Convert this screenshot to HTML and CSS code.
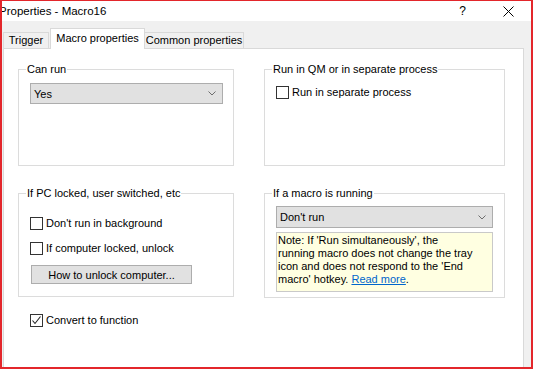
FILE: index.html
```html
<!DOCTYPE html>
<html lang="en">
<head>
  <meta charset="UTF-8" />
  <title>Properties - Macro16</title>
  <link rel="stylesheet" href="styles.css">
</head>
<body>
  <div class="window">
    <div class="titlebar">
      <span class="title">Properties - Macro16</span>
      <span class="help">?</span>
      <svg class="close" width="11" height="11" viewBox="0 0 11 11">
        <path d="M0.5 0.5 L10.5 10.5 M10.5 0.5 L0.5 10.5" stroke="#000" stroke-width="1" fill="none"/>
      </svg>
    </div>

    <div class="frame">
      <div class="tabs">
        <div class="tab tab-trigger">Trigger</div>
        <div class="tab tab-macro active">Macro properties</div>
        <div class="tab tab-common">Common properties</div>
      </div>

      <div class="page">
        <div class="groups">
          <fieldset class="group group-short">
            <legend>Can run</legend>
            <div class="group-body can-run">
              <div class="select select-yes">
                <span>Yes</span>
                <svg width="8" height="5" viewBox="0 0 8 5"><polyline points="0.5,0.5 4,4 7.5,0.5" fill="none" stroke="#6d6d6d" stroke-width="1"/></svg>
              </div>
            </div>
          </fieldset>

          <fieldset class="group group-short">
            <legend>Run in QM or in separate process</legend>
            <div class="group-body run-qm">
              <div class="check"><span class="box"></span>Run in separate process</div>
            </div>
          </fieldset>

          <fieldset class="group group-tall">
            <legend>If PC locked, user switched, etc</legend>
            <div class="group-body pc-locked">
              <div class="check"><span class="box"></span>Don't run in background</div>
              <div class="check"><span class="box"></span>If computer locked, unlock</div>
              <button class="btn">How to unlock computer...</button>
            </div>
          </fieldset>

          <fieldset class="group group-tall group-right">
            <legend>If a macro is running</legend>
            <div class="group-body running">
              <div class="select select-run">
                <span>Don't run</span>
                <svg width="8" height="5" viewBox="0 0 8 5"><polyline points="0.5,0.5 4,4 7.5,0.5" fill="none" stroke="#6d6d6d" stroke-width="1"/></svg>
              </div>
              <div class="note">
                Note: If 'Run simultaneously', the<br>
                running macro does not change the tray<br>
                icon and does not respond to the 'End<br>
                macro' hotkey. <a href="#">Read more</a>.
              </div>
            </div>
          </fieldset>
        </div>

        <div class="check convert">
          <span class="box">
            <svg width="11" height="11" viewBox="0 0 11 11"><polyline points="1.5,5.5 4,8.5 9.5,1.5" fill="none" stroke="#222" stroke-width="1.1"/></svg>
          </span>Convert to function
        </div>
      </div>
    </div>
  </div>
</body>
</html>
```

FILE: styles.css
```css
* {
  box-sizing: border-box;
}

body {
  margin: 0;
  font-family: 'Segoe UI', 'Liberation Sans', sans-serif;
  font-size: 11px;
  color: #000;
  background: #fff;
}

.window {
  width: 533px;
  height: 369px;
  border: 2px solid #e3262b;
  border-top-width: 1px;
  display: flex;
  flex-direction: column;
  overflow: hidden;
}

.titlebar {
  height: 20px;
  flex: none;
  display: flex;
  align-items: center;
  background: #fff;
}

.title {
  font-size: 11.5px;
  margin-left: -3px;
  flex: 1;
}

.help {
  font-size: 12px;
  margin-right: 37px;
}

.close {
  margin-right: 17px;
}

.frame {
  flex: 1;
  display: flex;
  flex-direction: column;
  background: #f0f0f0;
  padding: 0 7px 0 1px;
}

.tabs {
  height: 27px;
  flex: none;
  display: flex;
  align-items: flex-end;
}

.tab {
  height: 16px;
  display: flex;
  align-items: center;
  justify-content: center;
  border: 1px solid #d9d9d9;
  border-bottom: none;
  background: #f0f0f0;
  white-space: nowrap;
  padding-bottom: 1px;
}

.tab-trigger {
  width: 46px;
  margin-right: 1px;
}

.tab-macro {
  width: 95px;
}

.tab-common {
  width: 100px;
  margin-left: -1px;
}

.tab.active {
  height: 21px;
  margin-bottom: -1px;
  background: #fff;
  position: relative;
  z-index: 1;
  padding-bottom: 2px;
}

.page {
  flex: 1;
  background: #fff;
  border: 1px solid #d9d9d9;
  border-bottom: none;
  padding: 13px 0 0 14px;
}

.groups {
  display: grid;
  grid-template-columns: 216px 241px;
  column-gap: 30px;
  row-gap: 20px;
  align-items: start;
}

.group {
  margin: 0;
  padding: 0;
  min-width: 0;
  border: 1px solid #dcdcdc;
}

.group legend {
  margin-left: 7px;
  padding: 0 1px;
  line-height: 14px;
}

.group-short {
  height: 104px;
}

.group-tall {
  height: 111px;
}

.group-right {
  height: 112px;
}

.group-body {
  padding-left: 11px;
}

.can-run {
  padding-top: 7px;
}

.run-qm {
  padding-top: 10px;
}

.pc-locked {
  padding-top: 17px;
}

.running {
  padding-top: 6px;
}

.select {
  height: 21px;
  display: flex;
  align-items: center;
  justify-content: space-between;
  padding: 0 6px 0 3px;
  background: #e1e1e1;
  border: 1px solid #adadad;
}

.select-yes {
  width: 193px;
}

.select-run {
  width: 217px;
  height: 22px;
}

.check {
  display: flex;
  align-items: center;
  height: 13px;
  line-height: 13px;
  white-space: nowrap;
}

.check .box {
  width: 13px;
  height: 13px;
  flex: none;
  margin-right: 3px;
  border: 1px solid #333;
  background: #fff;
  display: flex;
  align-items: center;
  justify-content: center;
}

.pc-locked .check + .check {
  margin-top: 12px;
}

.btn {
  display: block;
  margin: 10px 0 0 1px;
  width: 161px;
  height: 19px;
  padding: 0;
  font: inherit;
  color: #000;
  background: #e1e1e1;
  border: 1px solid #adadad;
}

.note {
  margin-top: 4px;
  width: 217px;
  height: 60px;
  padding: 1px 2px 0 1px;
  line-height: 13px;
  background: #ffffe1;
  border: 1px solid #c9c9c9;
}

.note a {
  color: #0066cc;
}

.convert {
  margin: 16px 0 0 12px;
}
```
